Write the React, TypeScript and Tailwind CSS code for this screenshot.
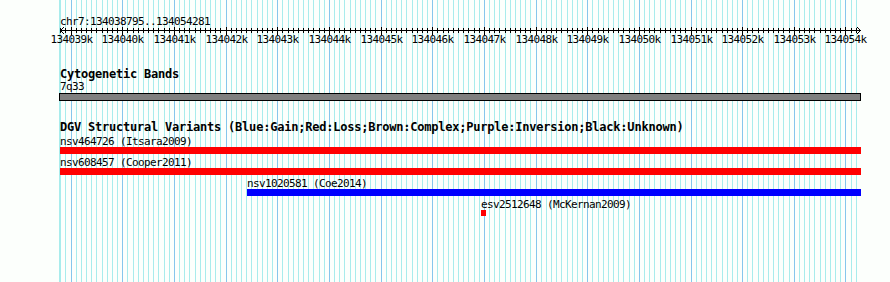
const START = 134038795;
const END = 134054281;
const X0 = 60;
const W = 800;
const RIGHT = 861;

const px = (bp: number) => X0 + ((bp - START) * W) / (END - START);

type Feature = {
  name: string;
  source: string;
  start: number;
  end: number;
  color: string;
  height: string;
};

const features: Feature[] = [
  { name: "nsv464726", source: "Itsara2009", start: START, end: END + 100, color: "bg-[#ff0000]", height: "h-[7px]" },
  { name: "nsv608457", source: "Cooper2011", start: START, end: END + 100, color: "bg-[#ff0000]", height: "h-[7px]" },
  { name: "nsv1020581", source: "Coe2014", start: 134042415, end: END + 100, color: "bg-[#0000ff]", height: "h-[7px]" },
  { name: "esv2512648", source: "McKernan2009", start: 134046945, end: 134047045, color: "bg-[#ff0000]", height: "h-[6px]" },
];

const ticks: number[] = [];
for (let bp = 134038800; bp <= 134054200; bp += 100) ticks.push(bp);
const majors = ticks.filter((bp) => bp % 1000 === 0);

function Grid() {
  return (
    <svg className="absolute inset-0" width={890} height={282} shapeRendering="crispEdges">
      <line x1={59.5} x2={59.5} y1={0} y2={282} stroke="#a8ecec" />
      {ticks.map((bp) => {
        const x = Math.round(px(bp)) + 0.5;
        const major = bp % 1000 === 0;
        return (
          <line key={bp} x1={x} x2={x} y1={0} y2={282} stroke={major ? "#86c6ec" : "#a8ecec"} />
        );
      })}
    </svg>
  );
}

function Axis() {
  return (
    <svg className="-mt-[1px] block" width={890} height={9} shapeRendering="crispEdges">
      <line x1={60} x2={RIGHT} y1={4.5} y2={4.5} stroke="#000" />
      <polyline points="64,1 60.5,4.5 64,8" fill="none" stroke="#000" shapeRendering="auto" />
      <polyline points="857,1 860.5,4.5 857,8" fill="none" stroke="#000" shapeRendering="auto" />
      {ticks.map((bp) => {
        const x = Math.round(px(bp)) + 0.5;
        const major = bp % 1000 === 0;
        return <line key={bp} x1={x} x2={x} y1={major ? 1 : 2} y2={major ? 9 : 7} stroke="#000" />;
      })}
    </svg>
  );
}

export default function App() {
  return (
    <div className="relative h-[282px] w-[890px] overflow-hidden bg-[#fcfffc] font-['DejaVu_Sans_Mono',monospace] text-black">
      <Grid />
      <div className="relative flex flex-col">
        <div className="mt-[16px] h-[11px] pl-[60px] text-[11px] leading-[11px] tracking-[-0.62px]">
          chr7:134038795..134054281
        </div>
        <Axis />
        <div className="relative -mt-[1px] h-[11px] text-[11px] leading-[11px] tracking-[-0.62px]">
          {majors.map((bp) => (
            <span
              key={bp}
              className="absolute top-0 -translate-x-1/2 whitespace-nowrap"
              style={{ left: Math.round(px(bp)) + 0.5 }}
            >
              {bp / 1000}k
            </span>
          ))}
        </div>

        <div className="mt-[23px] h-[12px] pl-[60px] text-[12px] font-bold leading-[12px] tracking-[-0.22px]">
          Cytogenetic Bands
        </div>
        <div className="mt-[1px] h-[11px] pl-[60px] text-[11px] leading-[11px] tracking-[-0.62px]">7q33</div>
        <div className="ml-[59px] mt-[1px] h-[8px] w-[802px] border border-black bg-[#808080]" />

        <div className="mt-[20px] h-[12px] whitespace-nowrap pl-[60px] text-[12px] font-bold leading-[12px] tracking-[-0.22px]">
          DGV Structural Variants (Blue:Gain;Red:Loss;Brown:Complex;Purple:Inversion;Black:Unknown)
        </div>
        <div className="mt-[3px] flex flex-col gap-[3px]">
          {features.map((f) => {
            const left = Math.round(px(f.start));
            const right = Math.min(RIGHT, Math.round(px(f.end)));
            return (
              <div key={f.name} className="flex flex-col" style={{ marginLeft: left }}>
                <div className="h-[11px] whitespace-nowrap text-[11px] leading-[11px] tracking-[-0.62px]">
                  {f.name} ({f.source})
                </div>
                <div className={`${f.color} ${f.height}`} style={{ width: Math.max(5, right - left) }} />
              </div>
            );
          })}
        </div>
      </div>
    </div>
  );
}
